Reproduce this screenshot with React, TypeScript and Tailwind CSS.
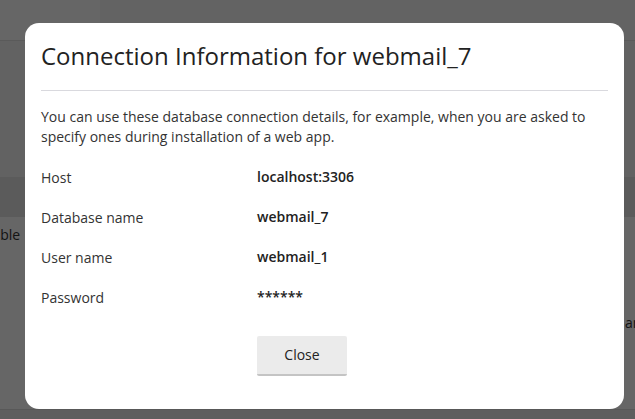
const rows = [
  { label: "Host", value: "localhost:3306" },
  { label: "Database name", value: "webmail_7" },
  { label: "User name", value: "webmail_1" },
  { label: "Password", value: "******" },
];

const BackgroundPage = () => {
  return (
    <div className="h-[419px] w-[635px] overflow-hidden bg-white text-sm text-[#333]">
      <div className="flex h-[41px] border-b border-[#e1e1e1]">
        <div className="w-[100px] bg-white" />
        <div className="flex-1 bg-[#f7f7f7]" />
      </div>
      <div className="h-[136px] bg-[#f4f4f4]" />
      <div className="h-10 bg-[#e3e3e3]" />
      <div className="flex h-[192px] flex-col justify-between bg-white pt-[8px] pb-[76px]">
        <span className="-ml-[28px] leading-5">Disable</span>
        <span className="ml-[625px] leading-5 whitespace-nowrap">
          and more
        </span>
      </div>
      <div className="h-10 border-t border-[#dcdcdc] bg-[#ececec]" />
    </div>
  );
};

const ConnectionInfoDialog = () => {
  return (
    <div className="absolute left-[25px] top-[23px] w-[599px] h-[386px] rounded-[14px] bg-white px-4 pt-[17px]">
      <h2 className="border-b border-[#d9d9de] pb-[18px] text-[24px] font-normal leading-8 text-[#222]">
        Connection Information for webmail_7
      </h2>
      <p className="mt-4 text-sm leading-5 text-[#333]">
        You can use these database connection details, for example, when you
        are asked to specify ones during installation of a web app.
      </p>
      <div className="mt-[21px] grid grid-cols-[216px_1fr] gap-y-5 text-sm leading-5">
        {rows.map((row) => (
          <div key={row.label} className="contents">
            <span className="text-[#333]">{row.label}</span>
            <span className="-mt-px font-semibold text-[#222]">
              {row.value}
            </span>
          </div>
        ))}
      </div>
      <div className="mt-[28px] pl-[216px]">
        <button className="h-10 w-[90px] rounded-[2px] border-b-2 border-[#c4c4c4] bg-[#ebebeb] text-sm text-[#222]">
          Close
        </button>
      </div>
    </div>
  );
};

export default function App() {
  return (
    <div
      className="relative h-[419px] w-[635px] overflow-hidden"
      style={{ fontFamily: '"Open Sans", "Liberation Sans", sans-serif' }}
    >
      <BackgroundPage />
      <div className="absolute inset-0 bg-black/60" />
      <ConnectionInfoDialog />
    </div>
  );
}
